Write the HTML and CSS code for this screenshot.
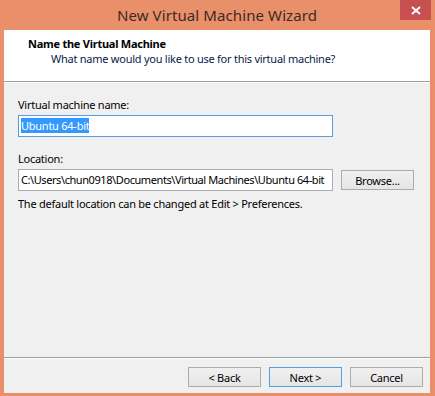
FILE: index.html
```html
<!DOCTYPE html>
<html lang="en">
<head>
    <meta charset="UTF-8">
    <title>New Virtual Machine Wizard</title>
    <link rel="stylesheet" href="styles.css">
</head>
<body>
    <div class="window">
        <div class="titlebar">
            <span class="title">New Virtual Machine Wizard</span>
            <button class="close" type="button" aria-label="Close">
                <svg width="10" height="9" viewBox="0 0 10 9">
                    <path d="M1 1 L9 8 M9 1 L1 8" stroke="#fff" stroke-width="2" fill="none"/>
                </svg>
            </button>
        </div>

        <div class="client">
            <div class="header">
                <h1>Name the Virtual Machine</h1>
                <p>What name would you like to use for this virtual machine?</p>
            </div>

            <div class="content">
                <label for="vm-name">Virtual machine name:</label>
                <div class="textbox focused" id="vm-name"><span class="selected">Ubuntu 64-bit</span></div>

                <label for="vm-location" class="gap">Location:</label>
                <div class="row">
                    <div class="textbox path" id="vm-location">C:\Users\chun0918\Documents\Virtual Machines\Ubuntu 64-bit</div>
                    <button class="btn" type="button">Browse...</button>
                </div>
                <p class="hint">The default location can be changed at Edit &gt; Preferences.</p>
            </div>

            <div class="footer">
                <button class="btn" type="button">&lt; Back</button>
                <button class="btn default" type="button">Next &gt;</button>
                <button class="btn" type="button">Cancel</button>
            </div>
        </div>
    </div>
</body>
</html>
```

FILE: styles.css
```css
:root {
    --frame: #e9906a;
    --face: #f0f0f0;
    --ui-font: "Noto Sans", "DejaVu Sans", sans-serif;
}

html, body {
    margin: 0;
    padding: 0;
    height: 100%;
}

body {
    background-color: var(--frame);
    font-family: var(--ui-font);
    font-size: 11px;
    letter-spacing: -0.25px;
    color: #000;
}

.window {
    height: 396px;
    display: flex;
    flex-direction: column;
    padding: 0 5px 3px 4px;
    box-sizing: border-box;
}

.titlebar {
    height: 30px;
    flex: none;
    position: relative;
    display: flex;
    align-items: center;
    justify-content: center;
}

.title {
    font-size: 15px;
    color: #3b2b24;
    margin-top: -1px;
    letter-spacing: 0.1px;
}

.close {
    position: absolute;
    top: 0;
    right: -1px;
    width: 31px;
    height: 20px;
    border: none;
    padding: 0;
    background-color: #c75050;
    display: flex;
    align-items: center;
    justify-content: center;
}

.client {
    flex: 1;
    display: flex;
    flex-direction: column;
    background-color: var(--face);
}

.header {
    height: 52px;
    box-sizing: border-box;
    background-color: #fff;
    border-bottom: 1px solid #a0a0a0;
    box-shadow: 0 1px 0 #fff;
    padding: 6px 0 0 24px;
}

.header h1 {
    margin: 0;
    font-size: 11px;
    font-weight: bold;
    line-height: 15px;
}

.header p {
    margin: 0;
    padding-left: 23px;
    line-height: 15px;
    color: #0a1a4a;
}

.content {
    flex: 1;
    padding: 15px 14px 0 14px;
}

label {
    display: block;
    line-height: 16px;
}

label.gap {
    margin-top: 14px;
}

.textbox {
    width: 315px;
    height: 22px;
    box-sizing: border-box;
    border: 1px solid #abadb3;
    background-color: #fff;
    padding: 2px 2px;
    line-height: 16px;
    white-space: nowrap;
    overflow: hidden;
    margin-top: 2px;
}

.textbox.focused {
    border-color: #569de5;
}

.textbox.path {
    letter-spacing: -0.42px;
}

.selected {
    background-color: #3399ff;
    color: #fff;
}

.row {
    display: flex;
    align-items: center;
    gap: 8px;
}

.btn {
    width: 73px;
    height: 20px;
    box-sizing: border-box;
    border: 1px solid #acacac;
    background: linear-gradient(#f0f0f0, #e5e5e5);
    font-family: var(--ui-font);
    font-size: 11px;
    letter-spacing: -0.25px;
    color: #000;
    padding: 0;
}

.row .btn {
    margin-top: 2px;
}

.btn.default {
    border-color: #569de5;
}

.hint {
    margin: 5px 0 0;
    line-height: 16px;
}

.footer {
    height: 36px;
    border-top: 1px solid #a0a0a0;
    box-shadow: inset 0 1px 0 #fff;
    display: flex;
    justify-content: flex-end;
    align-items: flex-start;
    gap: 8px;
    padding: 9px 7px 0 0;
    box-sizing: border-box;
}
```
